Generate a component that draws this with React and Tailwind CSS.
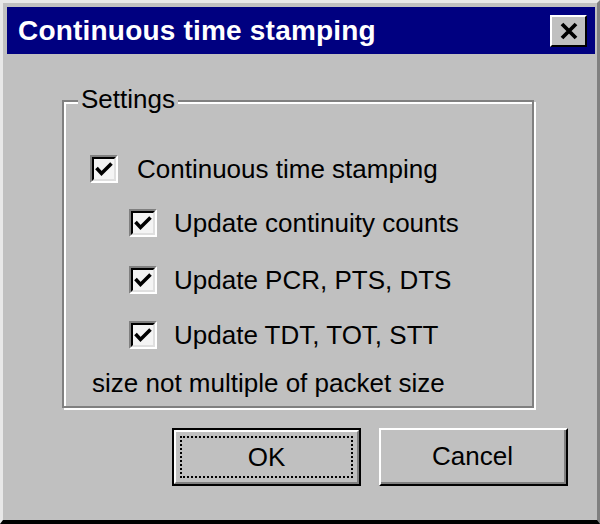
import React from "react";

const font = { fontFamily: '"Liberation Sans", Arial, sans-serif' };

const CheckBox = () => (
  <div className="w-[28px] h-[28px] shrink-0 bg-[#f4f4f4] border-2 border-t-[#808080] border-l-[#808080] border-b-white border-r-white">
    <div className="w-full h-full border-2 border-t-black border-l-black border-b-[#dfdfdf] border-r-[#dfdfdf] flex items-center justify-center">
      <svg width="18" height="16" viewBox="0 0 18 16">
        <path d="M1.5 7 L6.5 12.5 L16.5 2.5" fill="none" stroke="#000" strokeWidth="3.6" />
      </svg>
    </div>
  </div>
);

const Row = ({ label, indent, top }) => (
  <div className={`flex items-center ${indent ? "ml-[65px] gap-[17px]" : "ml-[26px] gap-[19px]"} ${top}`}>
    <CheckBox />
    <span className="text-[26px] leading-[28px] text-black">{label}</span>
  </div>
);

export default function App() {
  return (
    <div style={font} className="w-[600px] h-[524px] overflow-hidden bg-[#c0c0c0]">
      {/* window frame */}
      <div className="w-full h-full border-t-[3px] border-l-[3px] border-t-[#e8e8e8] border-l-[#e8e8e8] border-r-[3px] border-r-[#808080] border-b-[4px] border-b-black">
        <div className="w-full h-full p-[4px] pr-[2px] flex flex-col">
          {/* title bar */}
          <div className="h-[47px] bg-[#000080] flex items-center justify-between pl-[11px] pr-[8px]">
            <span className="text-white font-bold text-[28px] leading-none tracking-[0.2px]">Continuous time stamping</span>
            <button className="w-[37px] h-[32px] bg-[#c0c0c0] border-2 border-t-white border-l-white border-b-black border-r-black flex items-center justify-center">
              <svg width="20" height="18" viewBox="0 0 20 18">
                <path d="M3 2 L17 16 M17 2 L3 16" stroke="#000" strokeWidth="3.8" />
              </svg>
            </button>
          </div>

          {/* settings group */}
          <div className="relative ml-[55px] mt-[46px] w-[472px] h-[308px] border-2 border-[#808080] shadow-[inset_2px_2px_0_#fff,2px_2px_0_#fff]">
            <span className="absolute left-[14px] -top-[17px] px-[3px] bg-[#c0c0c0] text-[26px] leading-[28px] text-black">Settings</span>
            <div className="flex flex-col">
              <Row label="Continuous time stamping" top="mt-[53px]" />
              <Row label="Update continuity counts" indent top="mt-[26px]" />
              <Row label="Update PCR, PTS, DTS" indent top="mt-[29px]" />
              <Row label="Update TDT, TOT, STT" indent top="mt-[27px]" />
              <span className="ml-[28px] mt-[20px] text-[26px] leading-[28px] text-black">size not multiple of packet size</span>
            </div>
          </div>

          {/* buttons */}
          <div className="flex justify-end gap-[18px] pr-[27px] mt-[20px]">
            <button className="w-[189px] h-[58px] bg-[#c0c0c0] border-2 border-black">
              <div className="w-full h-full border-2 border-t-white border-l-white border-b-[#808080] border-r-[#808080] p-[4px]">
                <div className="w-full h-full border-2 border-dotted border-black flex items-center justify-center text-[26px] text-black">
                  OK
                </div>
              </div>
            </button>
            <button className="w-[189px] h-[58px] bg-[#c0c0c0] border-2 border-t-white border-l-white border-b-black border-r-black">
              <div className="w-full h-full border-b-2 border-r-2 border-[#808080] flex items-center justify-center text-[26px] text-black">
                Cancel
              </div>
            </button>
          </div>
        </div>
      </div>
    </div>
  );
}
